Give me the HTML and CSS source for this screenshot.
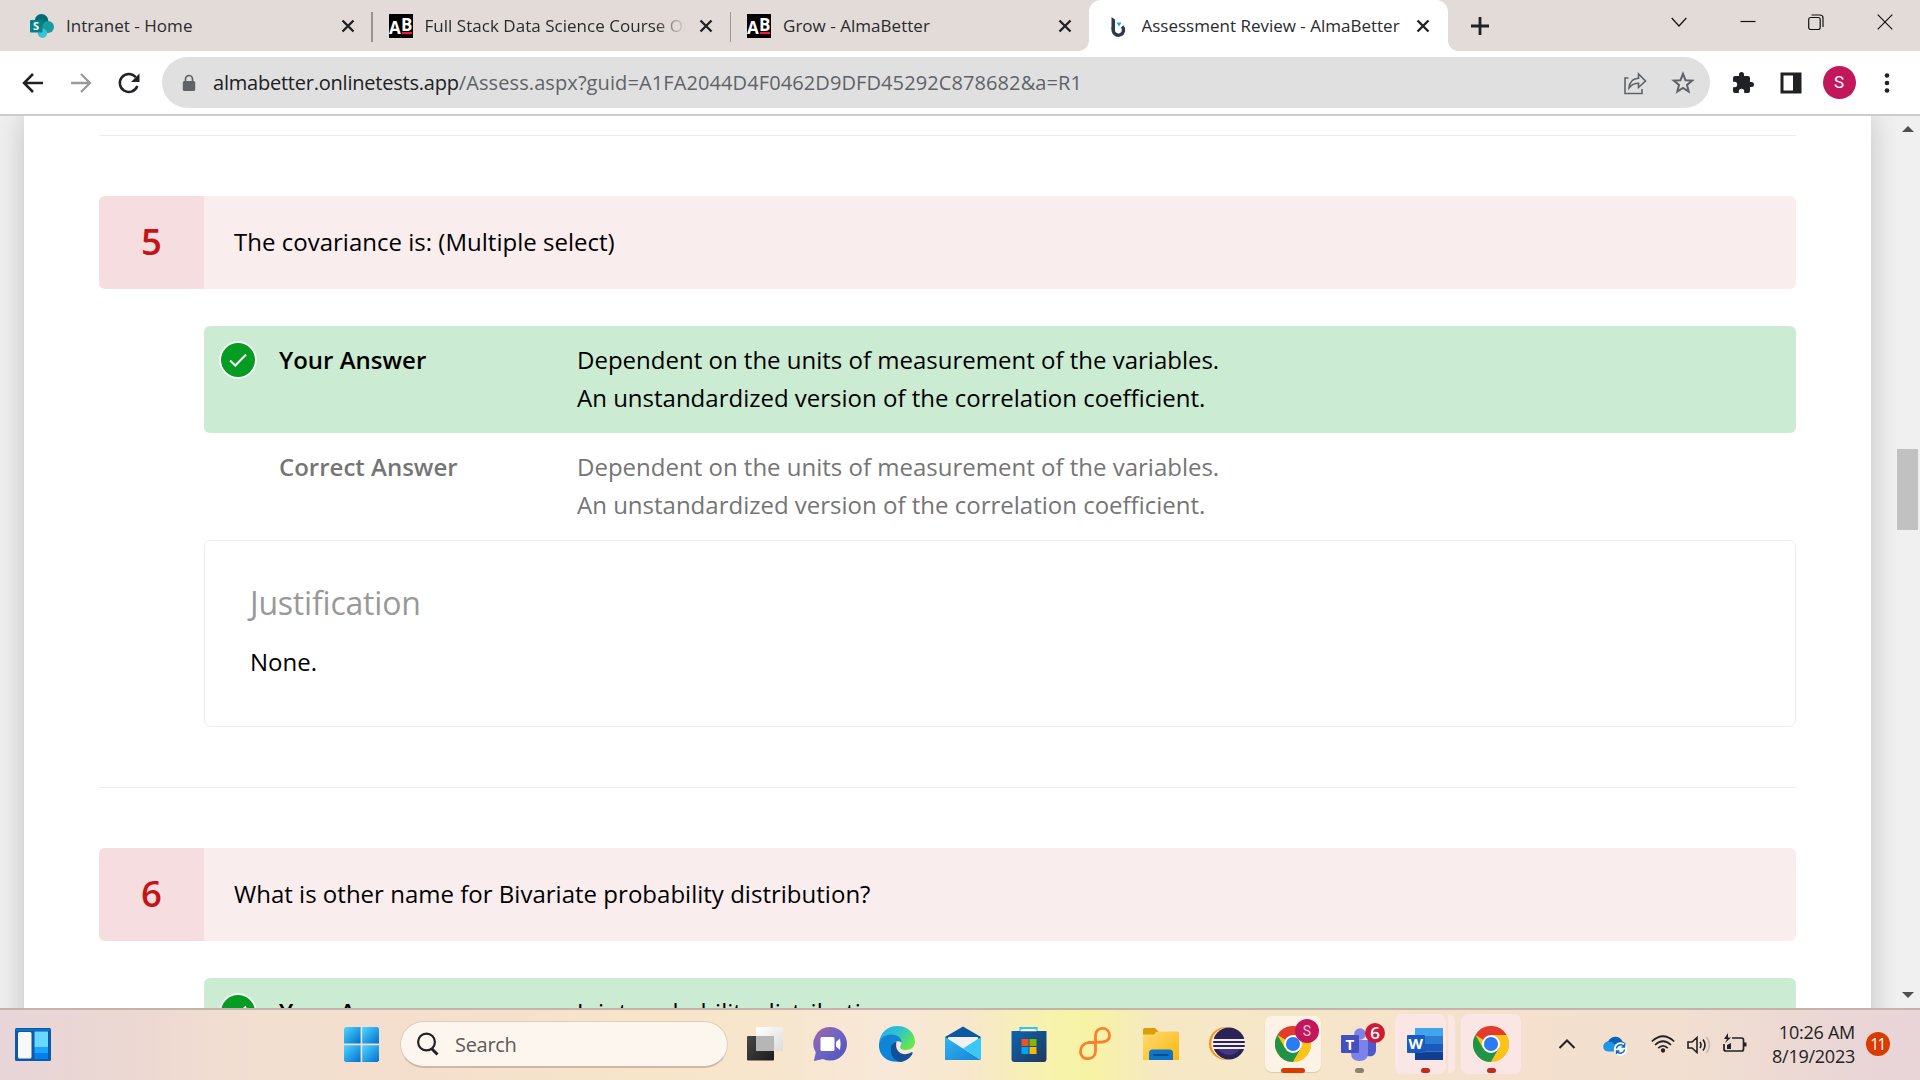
FILE: index.html
```html
<!DOCTYPE html>
<html lang="en">
<head>
<meta charset="utf-8">
<title>Assessment Review - AlmaBetter</title>
<link rel="stylesheet" href="styles.css">
</head>
<body>
<svg class="defs" width="0" height="0" aria-hidden="true">
  <defs>
    <linearGradient id="win" x1="0" y1="0" x2="1" y2="1"><stop offset="0" stop-color="#4fd5ff"/><stop offset="1" stop-color="#0070cf"/></linearGradient>
    <linearGradient id="chatG" x1="0" y1="0" x2="1" y2="1"><stop offset="0" stop-color="#a068a4"/><stop offset=".5" stop-color="#6e64c4"/><stop offset="1" stop-color="#4f50bf"/></linearGradient>
    <linearGradient id="edgeTop" x1="0" y1="0" x2="1" y2=".6"><stop offset="0" stop-color="#2aa9ee"/><stop offset=".5" stop-color="#2fc2d0"/><stop offset="1" stop-color="#66e84a"/></linearGradient>
    <linearGradient id="edgeMid" x1="0" y1="0" x2="0" y2="1"><stop offset="0" stop-color="#1285d0"/><stop offset="1" stop-color="#0a84e0"/></linearGradient>
    <linearGradient id="mailG" x1="0" y1="0" x2="1" y2="1"><stop offset="0" stop-color="#34b5ee"/><stop offset="1" stop-color="#1583d8"/></linearGradient>
    <linearGradient id="storeG" x1="0" y1="0" x2="1" y2="1"><stop offset="0" stop-color="#0b65b0"/><stop offset="1" stop-color="#20385f"/></linearGradient>
    <linearGradient id="foldG" x1="0" y1="0" x2="1" y2="1"><stop offset="0" stop-color="#ffda72"/><stop offset="1" stop-color="#fbb70c"/></linearGradient>
    <linearGradient id="whiteG" x1="0" y1="0" x2="1" y2="1"><stop offset="0" stop-color="#fff"/><stop offset="1" stop-color="#dcdcdc"/></linearGradient>
    <linearGradient id="darkG" x1="0" y1="0" x2="1" y2="1"><stop offset="0" stop-color="#484848"/><stop offset="1" stop-color="#1c1c1c"/></linearGradient>
    <symbol id="x" viewBox="0 0 16 16"><path d="M2.5 2.5l11 11M13.500 2.500l-11 11" fill="none" stroke="#202124" stroke-width="2.4"/></symbol>
    <symbol id="ab" viewBox="0 0 24 24"><path d="M0 0h24v24H0z" fill="#000"/><path d="M13 18h10v2.200H13z" fill="#f01a3c"/><text x="0" y="20" font-family="Open Sans, sans-serif" font-weight="700" font-size="17" fill="#fff">A</text><text x="12" y="16.500" font-family="Open Sans, sans-serif" font-weight="700" font-size="17" fill="#fff">B</text></symbol>
    <symbol id="check" viewBox="0 0 38 38"><circle cx="19" cy="19" r="18.700" fill="#fff"/><circle cx="19" cy="19" r="17" fill="#049c22"/><path d="M11 19.500l5.300 5L27 13.500" fill="none" stroke="#fff" stroke-width="2"/></symbol>
    <symbol id="chrome" viewBox="0 0 36 36">
      <circle cx="18" cy="18" r="18" fill="#fcc31a"/>
      <path d="M18 18L2.400 9A18 18 0 0 1 33.600 9z" fill="#e33b2e"/>
      <path d="M2.400 9A18 18 0 0 0 18 36l7.800-13.500L18 18 10.200 22.500z" fill="#219346"/>
      <path d="M18 9h15.600A18 18 0 0 1 18 36l7.800-13.500z" fill="#fcc31a"/>
      <circle cx="18" cy="18" r="9" fill="#fff"/><circle cx="18" cy="18" r="7.100" fill="#2a7cf0"/>
    </symbol>
  </defs>
</svg>

<header class="tabstrip">
  <div class="tab">
    <svg class="favicon" viewBox="0 0 24 24"><circle cx="11.500" cy="6.800" r="6.800" fill="#036c70"/><circle cx="18" cy="13" r="6" fill="#1a9ba1"/><circle cx="12.500" cy="19.300" r="4.700" fill="#37c6d0"/><rect y="6" width="12.500" height="12.500" rx="1" fill="#038387"/><text x="3" y="16.200" class="fav-letter">S</text></svg>
    <span class="title">Intranet - Home</span><svg class="close"><use href="#x"/></svg>
  </div>
  <div class="tab">
    <svg class="favicon"><use href="#ab"/></svg>
    <span class="title fade">Full Stack Data Science Course Online</span><svg class="close"><use href="#x"/></svg>
  </div>
  <div class="tab last">
    <svg class="favicon"><use href="#ab"/></svg>
    <span class="title">Grow - AlmaBetter</span><svg class="close"><use href="#x"/></svg>
  </div>
  <div class="tab active">
    <svg class="favicon" viewBox="0 0 24 24"><path d="M5.500 3l3.500 2.500v10h-3.500z" fill="#2b3a4a"/><path d="M7.200 13v3a5.200 5.200 0 1 0 9-3.600" fill="none" stroke="#2b3a4a" stroke-width="3.400"/><path d="M10.500 8.500h5l-2.500 4z" fill="#18a8e8"/></svg>
    <span class="title">Assessment Review - AlmaBetter</span><svg class="close"><use href="#x"/></svg>
  </div>
  <svg class="newtab" viewBox="0 0 20 20"><path d="M10 1v18M1 10h18" stroke="#202124" stroke-width="2.800"/></svg>
  <div class="controls">
    <span><svg viewBox="0 0 16 16"><path d="M.7 4L8 12l7.300-8"/></svg></span>
    <span><svg viewBox="0 0 16 16"><path d="M.5 7.500h15"/></svg></span>
    <span><svg viewBox="0 0 16 16"><rect x=".7" y="3.500" width="11.500" height="12" rx="2"/><path d="M3.500 1h8.500a3 3 0 0 1 3 3v9"/></svg></span>
    <span><svg viewBox="0 0 16 16"><path d="M.7.7l14.600 14.600M15.300.7L.7 15.300"/></svg></span>
  </div>
</header>

<nav class="toolbar">
  <span class="tool"><svg viewBox="0 0 24 24"><path d="M22 12H3.500M12 3l-9 9 9 9" fill="none" stroke="#202124" stroke-width="2.500"/></svg></span>
  <span class="tool"><svg viewBox="0 0 24 24"><path d="M2 12h18.500M12 3l9 9-9 9" fill="none" stroke="#9a9a9a" stroke-width="2.300"/></svg></span>
  <span class="tool"><svg viewBox="0 0 24 24"><path d="M20.300 15a9 9 0 1 1-1.500-8.700" fill="none" stroke="#202124" stroke-width="2.500"/><path d="M22.500 2.500v8.500h-8.500z" fill="#202124"/></svg></span>
  <div class="omnibox">
    <svg class="lock" viewBox="0 0 14 18"><path d="M3.500 8V5a3.500 3.500 0 0 1 7 0v3" fill="none" stroke="#5f6368" stroke-width="1.700"/><rect x=".8" y="7" width="12.400" height="10" rx="1.500" fill="#5f6368"/></svg>
    <span class="url"><span class="host">almabetter.onlinetests.app</span><span class="path">/Assess.aspx?guid=A1FA2044D4F0462D9DFD45292C878682&amp;a=R1</span></span>
    <span class="tool"><svg viewBox="0 0 24 24"><path d="M5.500 7H2v15.500h17V18M6 17c.5-6 3.500-9.500 9.500-9.800V3l7 7-7 6.500v-4.200c-4.500 0-7 1.500-9.500 4.700z" fill="none" stroke="#5f6368" stroke-width="1.600"/></svg></span>
    <span class="tool"><svg viewBox="0 0 24 24"><path d="M12 2.800l2.500 6.400 6.700.4-5.200 4.300 1.700 6.700-5.700-3.700-5.700 3.700L8 13.900 2.800 9.600l6.700-.4z" fill="none" stroke="#5f6368" stroke-width="2"/></svg></span>
  </div>
  <span class="tool"><svg viewBox="0 0 24 24"><path d="M20.500 11H19V7a2 2 0 0 0-2-2h-4V3.500a2.500 2.500 0 0 0-5 0V5H4a2 2 0 0 0-2 2v3.800h1.500a2.700 2.700 0 0 1 0 5.400H2V20a2 2 0 0 0 2 2h3.800v-1.500a2.700 2.700 0 0 1 5.400 0V22H17a2 2 0 0 0 2-2v-4h1.500a2.500 2.500 0 0 0 0-5z" fill="#202124"/></svg></span>
  <span class="tool"><svg viewBox="0 0 24 24"><path fill-rule="evenodd" d="M1.500 1.500h21v21h-21zM4.500 4.500v15h9.500v-15z" fill="#202124"/></svg></span>
  <span class="tool"><span class="avatar">S</span></span>
  <span class="tool"><svg viewBox="0 0 24 24" fill="#202124"><circle cx="12" cy="4.500" r="2.300"/><circle cx="12" cy="12" r="2.300"/><circle cx="12" cy="19.500" r="2.300"/></svg></span>
</nav>

<div class="viewport">
  <main class="page">
    <hr>
    <section class="item">
      <div class="question"><div class="num">5</div><h2>The covariance is: (Multiple select)</h2></div>
      <div class="answers">
        <div class="row yours"><svg class="check"><use href="#check"/></svg><strong>Your Answer</strong><p>Dependent on the units of measurement of the variables.<br>An unstandardized version of the correlation coefficient.</p></div>
        <div class="row"><span class="check"></span><strong>Correct Answer</strong><p>Dependent on the units of measurement of the variables.<br>An unstandardized version of the correlation coefficient.</p></div>
        <div class="justification"><h3>Justification</h3><p>None.</p></div>
      </div>
    </section>
    <hr>
    <section class="item">
      <div class="question"><div class="num">6</div><h2>What is other name for Bivariate probability distribution?</h2></div>
      <div class="answers">
        <div class="row yours"><svg class="check"><use href="#check"/></svg><strong>Your Answer</strong><p>Joint probability distribution</p></div>
      </div>
    </section>
  </main>
  <div class="scrollbar"><i class="up"></i><i class="thumb"></i><i class="down"></i></div>
</div>

<footer class="taskbar">
  <svg class="widgets" viewBox="0 0 36 34"><rect width="36" height="33" rx="1.500" fill="#0c59a8"/><rect x="1" y="1" width="34" height="2" fill="#0a72cc"/><rect x="3" y="4" width="13.500" height="26.500" rx="1.500" fill="#f8f8f8"/><rect x="19.500" y="3.500" width="13.500" height="15.500" fill="#67d8ff"/><rect x="19.500" y="19" width="13.500" height="6" fill="#1aa4ff"/><rect x="19.500" y="25" width="13.500" height="6" fill="#0280f0"/></svg>
  <svg class="start" viewBox="0 0 35 35" fill="url(#win)"><path d="M1.500 0h15.100v16.600H0V1.500z"/><path d="M18.200 0h15.300L35 1.500v15.100H18.200z"/><path d="M0 18.200h16.600V35H1.500L0 33.500z"/><path d="M18.200 18.200H35v15.300L33.500 35H18.200z"/></svg>
  <div class="search"><svg viewBox="0 0 22 24"><circle cx="9.500" cy="10" r="8.400" fill="none" stroke="#222" stroke-width="2.200"/><path d="M14.500 16.500l6 6" stroke="#222" stroke-width="3"/></svg><span>Search</span></div>
  <div class="apps">
    <div class="app"><svg viewBox="0 0 36 36"><rect y="10" width="27" height="24.500" rx="1" fill="url(#darkG)"/><rect x="9" y="1" width="27" height="24" rx="1" fill="url(#whiteG)"/><path d="M9 10h18v15H9z" fill="#b6b6b6"/></svg></div>
    <div class="app"><svg viewBox="0 0 36 36"><path d="M17.500 1A16.800 16.800 0 1 1 10 33L.8 35l2-8.500A16.800 16.800 0 0 1 17.500 1z" fill="url(#chatG)"/><rect x="7.500" y="11" width="14" height="14" rx="1.500" fill="#fff"/><path d="M23 16l4-3.500q1.200 5.500 0 11.500l-4-3.500z" fill="#fff"/></svg></div>
    <div class="app"><svg viewBox="0 0 36 36"><path d="M0 17C1 7 8 0 18.500 0 29 0 36 7.500 36 15.500c0 5-4 8.500-9 8.500-4 0-7-1.500-5.500-4C25 15 18 8 10 9.500 5 10.500 1.500 13 0 17z" fill="url(#edgeTop)"/><path d="M0 18C1 12 6 8.500 12 8.500c6 0 11 3.500 10.500 8C17 13 12 18 13 24c1 6 6 9.500 11 11C10 38.500-1 30 0 18z" fill="url(#edgeMid)"/><path d="M17.500 15.500c-9 2-7 19 4 20.500 5-.5 10-4 12-8.500.5-1.200-.5-1.500-1.500-1C24 31 15 26 17.500 15.500z" fill="#124f98"/></svg></div>
    <div class="app"><svg viewBox="0 0 36 36"><path d="M0 11L18 .500 36 11v8H0z" fill="#0a59a5"/><path d="M3.500 11h29L34 14 18 24 2 14z" fill="#f1f1f1"/><path d="M0 11l18 11.500L36 34H0z" fill="url(#mailG)"/><path d="M36 11L18 22.500 36 34z" fill="#39c8f4"/></svg></div>
    <div class="app"><svg viewBox="0 0 36 36"><path d="M9.500 7V2h16v5" fill="none" stroke="#2fc4f4" stroke-width="2.200"/><path d="M.5 5h35v28a3 3 0 0 1-3 3h-29a3 3 0 0 1-3-3z" fill="url(#storeG)"/><path d="M9.500 4.500h16" stroke="#fff" stroke-width="1.500"/><path d="M10.500 13H17.500v7h-7z" fill="#f25022"/><path d="M18.500 13h7v7h-7z" fill="#7fba00"/><path d="M10.500 21h7v7h-7z" fill="#00a4ef"/><path d="M18.500 21h7v7h-7z" fill="#ffb900"/></svg></div>
    <div class="app"><svg viewBox="0 0 36 36"><path d="M32.500 9.500c0-9.500-13.500-9.500-14 0v16c-.5 9.500-15 9.500-15 .5 0-5 3-8.500 8-9.500l14-.500c4-.5 7-2.500 7-6.500z" fill="none" stroke="#fb7f2d" stroke-width="2.800"/></svg></div>
    <div class="app"><svg viewBox="0 0 36 36"><path d="M0 4a2 2 0 0 1 2-2h10l4 4h-3l-2 4H0z" fill="#dc9d08"/><path d="M0 8.500h11l4-3h19.500L36 6.500V34H0z" fill="url(#foldG)"/><path d="M6 34v-7q0-3.500 3.500-3.500h17Q30 23.500 30 27v7z" fill="#0c75c8"/><path d="M10.500 29h15" stroke="#074b8c" stroke-width="2"/></svg></div>
    <div class="app"><svg viewBox="0 0 36 36"><ellipse cx="16" cy="17.500" rx="16" ry="16.200" fill="#f7941e"/><ellipse cx="19" cy="17.500" rx="16.700" ry="16" fill="#fff1cf"/><ellipse cx="20" cy="17.500" rx="16" ry="16" fill="#2c2255"/><path d="M9 23h22q-5 6-11 6t-11-6z" fill="#443684"/><path d="M4 14h32M4 18h32M4 22h32" stroke="#f3effa" stroke-width="2"/></svg></div>
    <div class="app open"><span class="tile focus"></span><svg><use href="#chrome"/></svg><b class="profile">S</b><i class="mark wide"></i></div>
    <div class="app open"><svg viewBox="0 0 36 36"><circle cx="19" cy="8" r="5.800" fill="#7b83eb"/><path d="M24 14h11v10c0 7-8 8-11 4z" fill="#5059c9"/><path d="M10 14h17v13q0 8-8.500 8T10 27z" fill="#7b83eb"/><rect y="9" width="18" height="18" rx="1" fill="#4450bb"/><text x="4.500" y="23.500" class="tile-letter">T</text></svg><b class="count">6</b><i class="mark grey"></i></div>
    <div class="app open"><span class="tile stacked"></span><svg viewBox="0 0 36 36"><path d="M8 2h28v8H8z" fill="#41a5ee"/><path d="M8 10h28v8H8z" fill="#2b7cd3"/><path d="M8 18h28v7.500H8z" fill="#185abd"/><path d="M8 25.500h28V34H8z" fill="#103f91"/><rect y="9" width="18" height="18" rx="1" fill="#185abd"/><text x="1.500" y="23" class="tile-letter">W</text></svg><i class="mark"></i></div>
    <div class="app open"><span class="tile"></span><svg><use href="#chrome"/></svg><i class="mark"></i></div>
  </div>
  <div class="tray">
    <svg class="chev" viewBox="0 0 18 12"><path d="M1.500 10L9 2.500l7.500 7.500" fill="none" stroke="#222" stroke-width="2"/></svg>
    <svg class="cloud" viewBox="0 0 24 22"><path d="M4 16a5 5 0 0 1 1-9.500C8 0 17 0 19.500 6.500q4 1 3.500 6L12 16z" fill="#0b62b8"/><path d="M5 16.500C-2 16-1 6.500 6 6.500c4 0 5 3 8 4.500l4 5.500z" fill="#1b98e8"/><circle cx="17.500" cy="14" r="6.700" fill="#fff"/><path d="M13.500 13.500a4.200 4.200 0 0 1 7.500-2M21.500 14.500a4.200 4.200 0 0 1-7.500 2M21.500 9v3h-3M13.500 19v-3h3" fill="none" stroke="#0f6cbd" stroke-width="1.400"/></svg>
    <svg class="wifi" viewBox="0 0 24 18" fill="none" stroke="#222" stroke-width="1.700"><path d="M.8 6.500q11.200-10.500 22.400 0M4 10q8-7.500 16 0M7.200 13.200q4.800-4.600 9.600 0"/><circle cx="12" cy="15.500" r="1.300" fill="#222"/></svg>
    <svg class="vol" viewBox="0 0 24 18" fill="none" stroke="#222" stroke-width="1.600"><path d="M1 6h4l5-4.500v15L5 12H1zM13 6q2 3 0 6M16 3.500q4 5.500 0 11"/><path d="M19.500 1q6 8 0 16" stroke="#c7b9ad"/></svg>
    <svg class="batt" viewBox="0 0 24 20" fill="none" stroke="#222" stroke-width="1.700"><path d="M9 5h9.500a2 2 0 0 1 2 2v9a2 2 0 0 1-2 2H3a2 2 0 0 1-2-2v-5"/><path d="M21 9.500h2.500v4H21zM4 16v-4l4-2v6zM5 0L1 6h3L2 10l6-5.500H5z" fill="#222" stroke="none"/></svg>
    <div class="clock"><span>10:26 AM</span><span>8/19/2023</span></div>
    <b class="notif">11</b>
  </div>
</footer>
</body>
</html>
```
FILE: styles.css
```css
* { box-sizing: border-box; }
body {
  margin: 0;
  width: 1920px;
  height: 1080px;
  overflow: hidden;
  display: flex;
  flex-direction: column;
  font-family: "Open Sans", "Noto Sans", sans-serif;
  color: #000;
  background: #fff;
}
h2, h3, p { margin: 0; font-weight: 400; }
svg { display: block; flex: none; }
.defs { position: absolute; }

/* tab strip */
.tabstrip { height: 51px; flex: none; display: flex; align-items: stretch; background: #e3dbd8; padding-left: 13.5px; }
.tab {
  width: 358.5px;
  height: 51px;
  padding: 0 16.5px;
  display: flex;
  align-items: center;
  position: relative;
  font-size: 17px;
  letter-spacing: .03px;
  color: #2a2b2e;
}
.tab:not(.last):not(.active)::after { content: ""; position: absolute; right: -.5px; top: 12px; width: 1.5px; height: 30px; background: #999391; }
.tab.active { background: #fff; border-radius: 12px 12px 0 0; letter-spacing: 0; }
.tab.active::before, .tab.active::after { content: ""; position: absolute; bottom: 0; width: 10px; height: 10px; }
.tab.active::before { left: -10px; background: radial-gradient(circle at 0 0, transparent 9.5px, #fff 10px); }
.tab.active::after { right: -10px; background: radial-gradient(circle at 100% 0, transparent 9.5px, #fff 10px); }
.favicon { width: 24px; height: 24px; margin-right: 12px; }
.fav-letter { font: 700 11px "Open Sans", sans-serif; fill: #fff; }
.title { flex: 1; white-space: nowrap; overflow: hidden; line-height: 30px; }
.title.fade { margin-right: 12px; -webkit-mask-image: linear-gradient(90deg, #000 88%, transparent); mask-image: linear-gradient(90deg, #000 88%, transparent); }
.close { width: 16px; height: 16px; }
.newtab { width: 20px; height: 20px; margin: 16px 0 0 22.5px; }
.controls { display: flex; margin-left: auto; height: 43px; padding-right: .5px; }
.controls span { width: 68.7px; display: grid; place-items: center; }
.controls svg { width: 16px; height: 16px; fill: none; stroke: #111; stroke-width: 1.2; }

/* toolbar */
.toolbar { height: 65px; flex: none; display: flex; align-items: center; padding: 0 9px; border-bottom: 2px solid #ccc; background: #fff; }
.tool { width: 48px; height: 48px; display: grid; place-items: center; flex: none; }
.tool svg { width: 24px; height: 24px; }
.omnibox { flex: 1; height: 51px; margin: 0 9px; padding: 0 3px 0 20px; border-radius: 26px; background: #e0e0e0; display: flex; align-items: center; }
.lock { width: 14px; height: 18px; margin-right: 17px; }
.url { flex: 1; font-size: 20px; line-height: 30px; white-space: nowrap; }
.host { color: #202124; letter-spacing: -.22px; }
.path { color: #5f6368; letter-spacing: .1px; }
.avatar { width: 33px; height: 33px; border-radius: 50%; background: #c2185b; color: #fff; font: 17px/33px Roboto, sans-serif; text-align: center; }

/* page viewport */
.viewport { height: 892px; flex: none; display: flex; overflow: hidden; background: #f0f0f0; padding-left: 24px; }
.page { width: 1847px; height: 1100px; padding: 19px 75px 0; background: #fff; box-shadow: 0 0 28px rgba(0, 0, 0, .2); font-size: 24px; line-height: 38px; }
hr { margin: 0; border: 0; height: 1px; background: #ececec; }
.item { padding: 60px 0; }
.question { display: flex; height: 93px; border-radius: 6px; overflow: hidden; background: #faedee; }
.num { width: 105px; background: #f6dde0; color: #c51318; font-size: 36.5px; font-weight: 600; line-height: 90px; text-align: center; }
.question h2 { padding-left: 30px; font-size: 24px; line-height: 91px; letter-spacing: .015px; }
.answers { margin: 37px 0 0 105px; }
.row { height: 107px; display: flex; padding: 15px 0 0 15px; border-radius: 6px; color: #757575; }
.row.yours { background: #ccebd3; color: #000; }
.check { width: 38px; height: 38px; margin-right: 22px; flex: none; }
.row strong { width: 298px; font-weight: 600; }
.justification { height: 187px; border: 1px solid #ececec; border-radius: 7px; padding: 40px 45px; }
.justification h3 { font-size: 32px; line-height: 44px; letter-spacing: -.2px; color: #999; margin-bottom: 18px; }
.scrollbar { width: 24px; margin-left: auto; position: relative; background: #f0f0f0; }
.scrollbar i { position: absolute; }
.thumb { left: 1px; top: 333px; width: 21px; height: 81px; background: #c1c1c1; }
.up, .down { left: 5.5px; border: 6px solid transparent; }
.up { top: 4px; border-bottom: 6px solid #505050; }
.down { bottom: 4px; border-top: 6px solid #505050; }

/* taskbar */
.taskbar {
  height: 72px;
  flex: none;
  display: flex;
  align-items: center;
  position: relative;
  padding: 0 30px 0 15px;
  border-top: 2px solid #c3b3a9;
  background: linear-gradient(90deg, #e8d5d8 0, #ead6d3 90px, #f3dfd0 260px, #f4dfcd 420px, #f6e5c9 640px, #f7e6cc 760px, #f8e8d8 890px, #f7e8cc 970px, #f7f2ac 1050px, #f7f3a4 1090px, #f6e8c4 1160px, #f6e6c9 1300px, #f4e0cc 1500px, #f2dfd0 1680px, #ead6d5 1840px, #e9d5d8 1920px);
}
.widgets { width: 36px; height: 34px; margin: 0 293px 1px 0; }
.start { width: 35px; height: 35px; margin-bottom: 1px; }
.search { width: 328px; height: 47px; margin: 0 4px 1px 21px; padding-left: 16px; display: flex; align-items: center; border-radius: 24px; background: #fcf6ef; border: 1px solid #ddcdbd; border-bottom: 2px solid #ccb9a8; color: #5c5a58; font-size: 20px; letter-spacing: -.3px; }
.search svg { width: 22px; height: 24px; margin-right: 16px; }
.apps { display: flex; }
.app { width: 66px; height: 70px; display: grid; place-items: center; position: relative; }
.app svg { width: 36px; height: 36px; position: relative; top: -1px; }
.tile { position: absolute; left: 3px; top: 4px; width: 60px; height: 60px; border-radius: 7px; background: #fbe6e6; }
.tile.focus { left: 5px; top: 6px; width: 56px; height: 56px; background: #fcf3e6; box-shadow: 0 1px 1px #d9c9b4; }
.tile.stacked { width: 51px; }
.tile.stacked::after { content: ""; position: absolute; left: 45px; top: 0; width: 15px; height: 60px; border-radius: 0 7px 7px 0; background: #fbe6e6; clip-path: inset(0 0 0 8px); }
.mark { position: absolute; left: 29px; top: 58px; width: 9px; height: 5px; border-radius: 3px; background: #c42b1c; }
.mark.wide { left: 21px; width: 24px; background: #da3b01; }
.mark.grey { background: #8a8174; }
.profile { position: absolute; left: 35px; top: 9px; width: 24px; height: 24px; border-radius: 50%; background: #c2185b; color: #f5c6d8; font: 14px/24px Roboto, sans-serif; text-align: center; }
.count { position: absolute; left: 39px; top: 13px; width: 20px; height: 20px; border-radius: 50%; background: #cf1a37; color: #fff; font: 600 17px/20px "Open Sans", sans-serif; text-align: center; }
.tile-letter { font: 700 15px "Open Sans", sans-serif; fill: #fff; }
.tray { margin-left: auto; display: flex; align-items: center; color: #222; }
.chev { width: 18px; height: 12px; margin: 0 27px 3px 0; }
.cloud { width: 24px; height: 22px; margin: 2px 24px 0 0; }
.wifi { width: 24px; height: 18px; margin: 0 12px 3px 0; }
.vol { width: 24px; height: 18px; margin: 0 12px 1px 0; }
.batt { width: 24px; height: 20px; margin: 0 0 5px; }
.clock { width: 108px; display: flex; flex-direction: column; align-items: flex-end; font-size: 18px; line-height: 24px; letter-spacing: -.25px; margin-bottom: 3px; }
.notif { width: 24px; height: 24px; margin-left: 11px; margin-bottom: 2px; border-radius: 50%; background: #da3b01; color: #fff; font: 15.5px/24px "Open Sans", sans-serif; letter-spacing: -1.5px; text-indent: -1px; text-align: center; }
```
